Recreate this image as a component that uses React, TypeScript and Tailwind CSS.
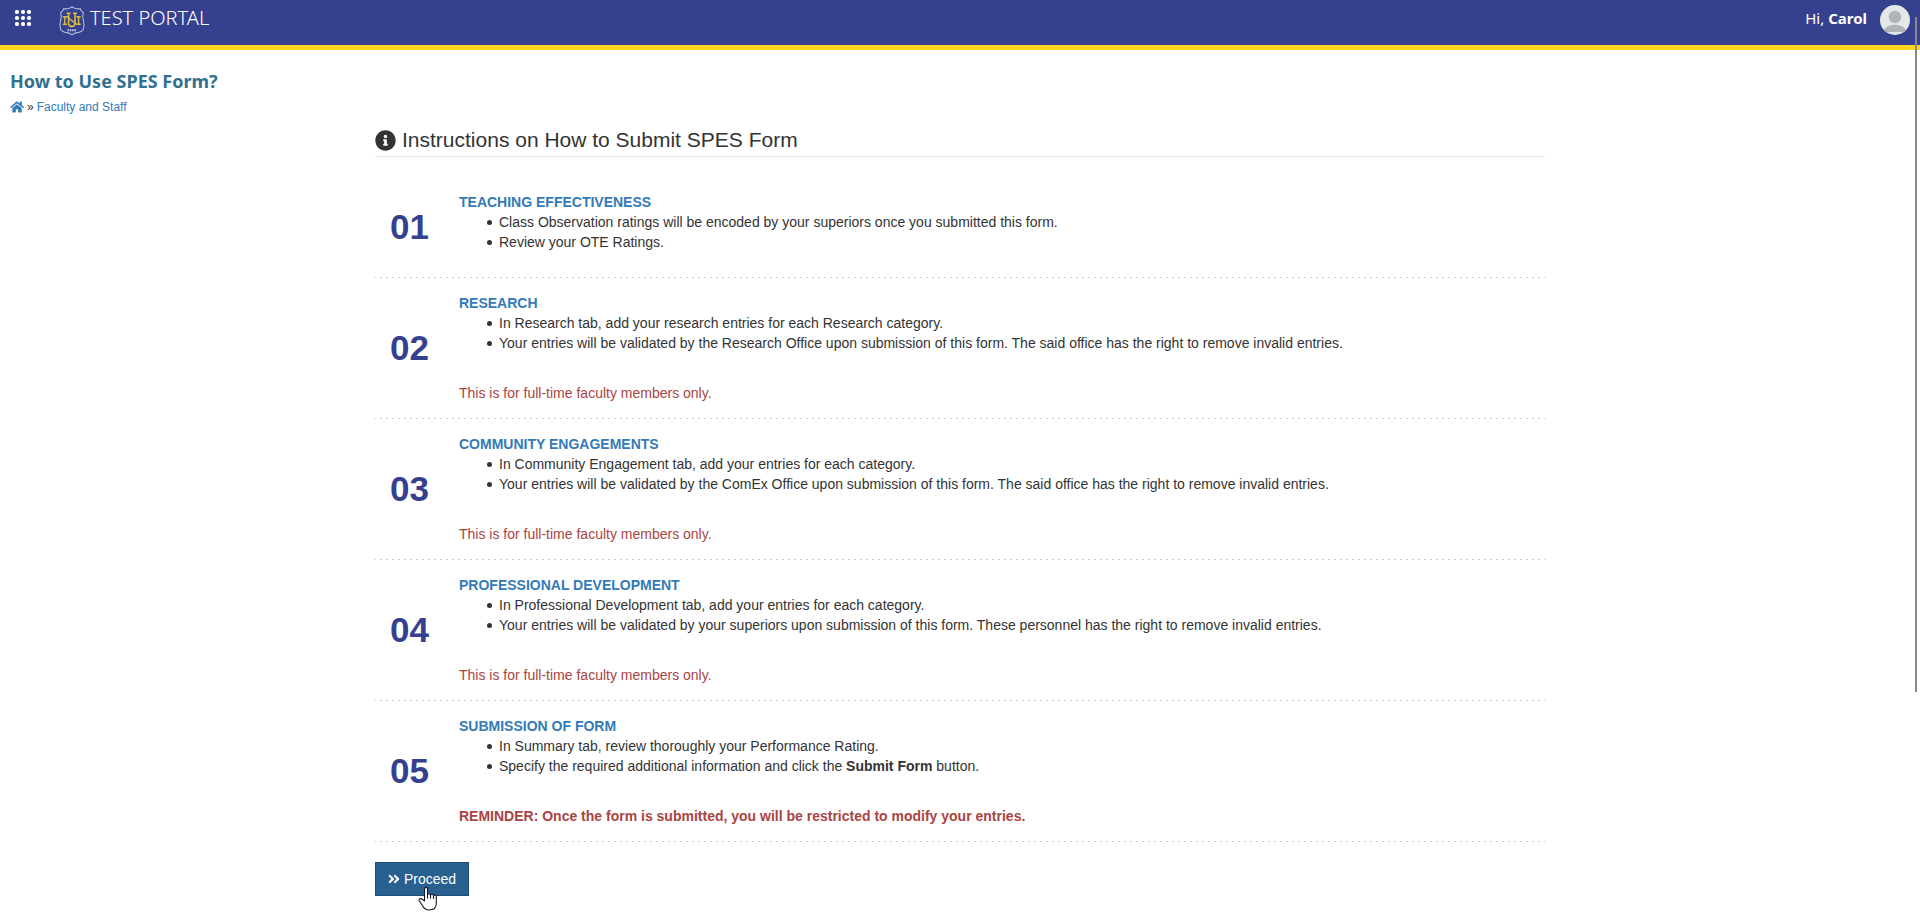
import { Fragment, ReactNode } from "react";
import { FaAngleDoubleRight, FaHome, FaInfoCircle } from "react-icons/fa";

interface Step {
  number: string;
  title: string;
  items: ReactNode[];
  note?: ReactNode;
}

const FULL_TIME_NOTE = "This is for full-time faculty members only.";

const STEPS: Step[] = [
  {
    number: "01",
    title: "TEACHING EFFECTIVENESS",
    items: [
      "Class Observation ratings will be encoded by your superiors once you submitted this form.",
      "Review your OTE Ratings."
    ]
  },
  {
    number: "02",
    title: "RESEARCH",
    items: [
      "In Research tab, add your research entries for each Research category.",
      "Your entries will be validated by the Research Office upon submission of this form. The said office has the right to remove invalid entries."
    ],
    note: FULL_TIME_NOTE
  },
  {
    number: "03",
    title: "COMMUNITY ENGAGEMENTS",
    items: [
      "In Community Engagement tab, add your entries for each category.",
      "Your entries will be validated by the ComEx Office upon submission of this form. The said office has the right to remove invalid entries."
    ],
    note: FULL_TIME_NOTE
  },
  {
    number: "04",
    title: "PROFESSIONAL DEVELOPMENT",
    items: [
      "In Professional Development tab, add your entries for each category.",
      "Your entries will be validated by your superiors upon submission of this form. These personnel has the right to remove invalid entries."
    ],
    note: FULL_TIME_NOTE
  },
  {
    number: "05",
    title: "SUBMISSION OF FORM",
    items: [
      "In Summary tab, review thoroughly your Performance Rating.",
      <Fragment key="submit">
        Specify the required additional information and click the <b>Submit Form</b> button.
      </Fragment>
    ],
    note: <b>REMINDER: Once the form is submitted, you will be restricted to modify your entries.</b>
  }
];

const DOTS = [2, 8, 14];

function MenuIcon() {
  return (
    <svg width="16" height="16" viewBox="0 0 16 16" fill="white" aria-hidden="true">
      {DOTS.map((y) => DOTS.map((x) => <circle key={`${x}-${y}`} cx={x} cy={y} r="2.1" />))}
    </svg>
  );
}

function Crest() {
  return (
    <svg width="26" height="30" viewBox="0 0 26 30" fill="none" aria-hidden="true">
      {/* Shield outline */}
      <path
        d="M13 1 Q9 3.4 4.6 2.8 Q4.2 5.4 1.6 6.4 Q2.9 10.5 1.5 15 Q0.4 20 1.8 23.4 Q3.2 26 8 26.6 Q11 27 13 28.8 Q15 27 18 26.6 Q22.8 26 24.2 23.4 Q25.6 20 24.5 15 Q23.1 10.5 24.4 6.4 Q21.8 5.4 21.4 2.8 Q17 3.4 13 1Z"
        stroke="#b3b9de"
        strokeWidth="1.1"
      />
      {/* Interlaced monogram */}
      <path
        d="M3.7 10.7h4.1L17.6 18.3M5.8 10.7v7.6M3.7 18.3h4.4M19.6 10.7v7.6M17.4 10.7h4.3M17.4 18.3h4.3"
        stroke="#d9bd45"
        strokeWidth="1.4"
      />
      <path
        d="M7.6 7.300h4M9.600 7.300v9.700q0 3.400 3.200 3.400t3.200-3.400V7.300M14 7.300h4"
        stroke="#d9bd45"
        strokeWidth="1.6"
      />
      <path d="M8.500 24.200h9" stroke="#c3c7e2" strokeWidth="2" strokeDasharray="1.6 0.7" />
    </svg>
  );
}

function Avatar() {
  return (
    <svg width="30" height="30" viewBox="0 0 30 30" aria-hidden="true">
      <defs>
        <clipPath id="avatar-clip">
          <circle cx="15" cy="15" r="15" />
        </clipPath>
      </defs>
      <g clipPath="url(#avatar-clip)">
        <rect width="30" height="30" fill="#e4e6e7" />
        <circle cx="15" cy="12" r="6.2" fill="#aeb4b7" />
        <path d="M3.5 27 Q5.5 19.8 15 19.8 T26.5 27Z" fill="#aeb4b7" />
      </g>
    </svg>
  );
}

function HandPointer() {
  return (
    <svg
      className="absolute left-[43px] top-6 pointer-events-none"
      width="20"
      height="26"
      viewBox="0 0 20 26"
      aria-hidden="true"
    >
      <path
        d="M6.5 15V3q0-1.6 1.5-1.6T9.5 3v6q0-1.3 1.5-1.3t1.5 1.6q0-1.1 1.5-1.1t1.5 1.8q0-1 1.4-1t1.4 1.6V17q0 7-7 7-4.5 0-6.6-4L1.3 14.8q-.8-1.6.6-2.1 1.3-.4 2.5.8Z"
        fill="white"
        stroke="#15152a"
        strokeWidth="1.1"
        strokeLinejoin="round"
      />
      <path d="M9.5 9v3.5M12.5 9v3.5M15.5 10v3" stroke="#15152a" strokeWidth="1.1" />
    </svg>
  );
}

function StepRow({ step }: { step: Step }) {
  return (
    <li className="flex items-center bg-[linear-gradient(90deg,#ccc_2px,transparent_2px)] bg-[length:6px_1px] bg-[position:-1px_100%] bg-repeat-x pt-[15px] pb-4">
      <div className="w-[84px] shrink-0 pl-[15px] text-[35px]/10 font-bold text-[#35408e]">{step.number}</div>
      <div className="flex-1">
        <h3 className="font-bold text-[#337ab7]">{step.title}</h3>
        <ul className="mb-[10px] pl-10">
          {step.items.map((item, i) => (
            <li
              key={i}
              className="relative before:absolute before:top-2 before:-left-3 before:size-[5px] before:rounded-full before:bg-[#333]"
            >
              {item}
            </li>
          ))}
        </ul>
        {step.note && <p className="pt-5 text-[#a94442]">{step.note}</p>}
      </div>
    </li>
  );
}

export default function App() {
  return (
    <div className="relative bg-white font-['Liberation_Sans',Arial,sans-serif] text-sm/5 text-[#333]">
      {/* Top bar */}
      <header className="flex h-[50px] items-start justify-between border-b-[5px] border-[#ffd41c] bg-[#35408e] pr-[10px] pl-[15px] font-['Noto_Sans',sans-serif] text-white">
        <div className="flex items-start">
          <button type="button" aria-label="Menu" className="mt-[10px]">
            <MenuIcon />
          </button>
          <a href="#" className="ml-7 flex items-start gap-[5px]">
            <span className="mt-[6px]">
              <Crest />
            </span>
            <span className="mt-[3px] text-xl/[30px] font-light">TEST PORTAL</span>
          </a>
        </div>
        <button type="button" className="mt-[5px] flex items-start gap-[13px] text-[15px]/[26px]">
          <span>
            Hi, <b>Carol</b>
          </span>
          <Avatar />
        </button>
      </header>

      {/* Page title and breadcrumb */}
      <div className="px-[10px] pt-4">
        <h1 className="font-['Noto_Sans',sans-serif] text-lg/[30px] font-bold text-[#31708f]">
          How to Use SPES Form?
        </h1>
        <nav className="mt-px flex items-center gap-[3px] text-xs/5">
          <a href="#" aria-label="Home" className="text-[#337ab7]">
            <FaHome size={14} />
          </a>
          <span>»</span>
          <a href="#" className="text-[#337ab7]">
            Faculty and Staff
          </a>
        </nav>
      </div>

      <main className="mx-auto max-w-[1170px] pt-2 pb-5">
        <h2 className="flex items-center gap-[6px] border-b border-[#e5e5e5] pb-px text-[21px]/[30px]">
          <FaInfoCircle size={21} />
          Instructions on How to Submit SPES Form
        </h2>

        <ol className="mt-5">
          {STEPS.map((step) => (
            <StepRow key={step.number} step={step} />
          ))}
        </ol>

        <div className="relative mt-5 inline-block">
          <button
            type="button"
            className="flex items-center gap-1 border border-[#204d74] bg-[#286090] px-3 py-[6px] text-white"
          >
            <FaAngleDoubleRight className="h-[14px] w-3" />
            Proceed
          </button>
          <HandPointer />
        </div>
      </main>

      {/* Scroll thumb */}
      <div className="absolute top-[17px] right-[3px] h-[675px] w-[2px] bg-[#8a8a8a]" />
    </div>
  );
}
